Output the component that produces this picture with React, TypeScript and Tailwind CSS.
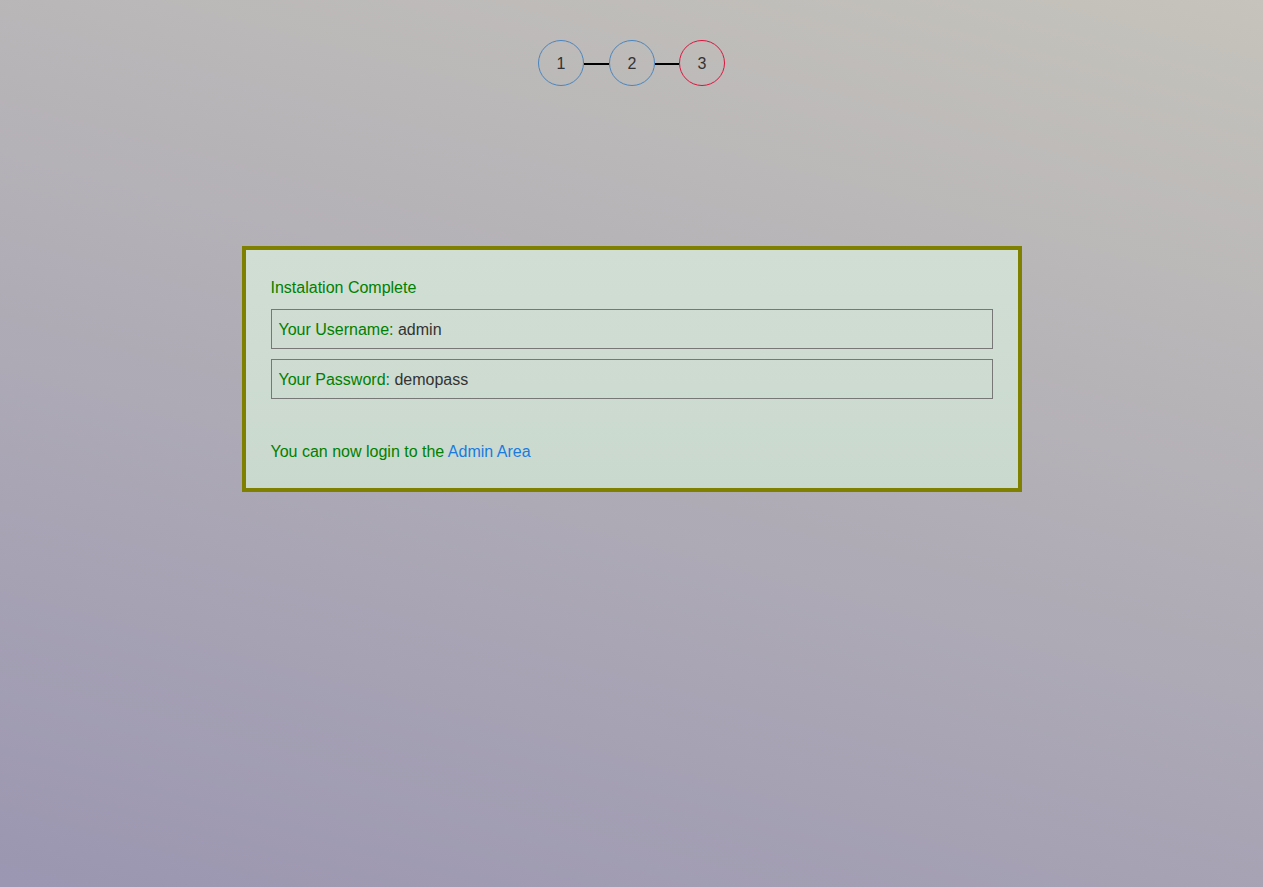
const steps = [
    { n: 1, ring: "border-[#4a85bd]", line: "w-[25px]" },
    { n: 2, ring: "border-[#4a85bd]", line: "w-[25px]" },
    { n: 3, ring: "border-[#dc143c]", line: "w-[24px]" },
]

export default function App() {
    return (
        <div className="min-h-[887px] w-full bg-[linear-gradient(195deg,#c5c3bb,#9b96b1)] font-['Liberation_Sans',Arial,sans-serif] text-base">
            <div className="flex justify-center pt-10">
                {steps.map((s, i) => (
                    <div key={s.n} className="flex items-center">
                        {i > 0 && <div className={`mt-[2px] h-[2px] ${s.line} bg-black`} />}
                        <div className={`flex h-[46px] w-[46px] items-center justify-center rounded-full border ${s.ring} pt-[2px] text-[#333]`}>
                            {s.n}
                        </div>
                    </div>
                ))}
            </div>

            <div className="mx-auto mt-[160px] w-[780px] border-4 border-[#808000] bg-[linear-gradient(180deg,#d1ded4,#cad9cd)] px-[25px] pt-[26px] pb-[24px] leading-6">
                <div className="text-[#008000]">Instalation Complete</div>
                <div className="mt-[9px] border border-[#777] px-[7px] pt-[8px] pb-[6px]">
                    <span className="text-[#008000]">Your Username: </span>
                    <span className="text-[#333]">admin</span>
                </div>
                <div className="mt-[10px] border border-[#777] px-[7px] pt-[8px] pb-[6px]">
                    <span className="text-[#008000]">Your Password: </span>
                    <span className="text-[#333]">demopass</span>
                </div>
                <div className="mt-[41px] text-[#008000]">
                    You can now login to the <a href="#" className="text-[#1a7be0]">Admin Area</a>
                </div>
            </div>
        </div>
    )
}
